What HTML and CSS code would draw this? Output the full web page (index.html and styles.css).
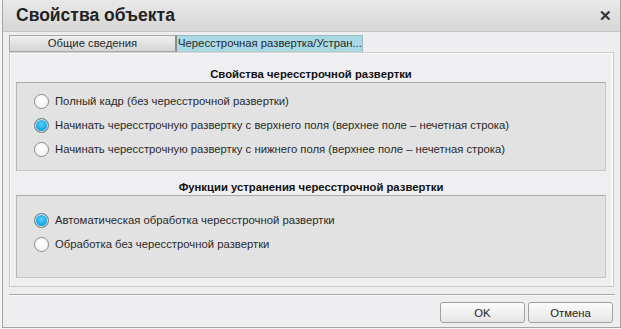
FILE: index.html
```html
<!DOCTYPE html>
<html lang="ru">

<head>
  <meta charset="UTF-8" />
  <title>Свойства объекта</title>
  <link rel="stylesheet" href="styles.css">
</head>

<body>
  <div class="dialog">
    <div class="title_bar">
      <span class="title">Свойства объекта</span>
      <span class="close_btn">&#x2715;</span>
    </div>

    <div class="content">
      <div class="tabs">
        <div class="tab">Общие сведения</div>
        <div class="tab tab_active">Чересстрочная развертка/Устран...</div>
      </div>

      <div class="panel">
        <div class="section_title">Свойства чересстрочной развертки</div>
        <div class="group group_first">
          <label class="radio_row"><span class="radio"></span>Полный кадр (без чересстрочной развертки)</label>
          <label class="radio_row"><span class="radio radio_on"></span>Начинать чересстрочную развертку с верхнего поля (верхнее поле – нечетная строка)</label>
          <label class="radio_row"><span class="radio"></span>Начинать чересстрочную развертку с нижнего поля (верхнее поле – нечетная строка)</label>
        </div>

        <div class="section_title">Функции устранения чересстрочной развертки</div>
        <div class="group group_second">
          <label class="radio_row"><span class="radio radio_on"></span>Автоматическая обработка чересстрочной развертки</label>
          <label class="radio_row"><span class="radio"></span>Обработка без чересстрочной развертки</label>
        </div>
      </div>

      <div class="footer">
        <button class="btn">OK</button>
        <button class="btn">Отмена</button>
      </div>
    </div>
  </div>
</body>

</html>
```

FILE: styles.css
```css
body {
  margin: 0;
  background: #f4f4f4;
  font-family: "Liberation Sans", Arial, sans-serif;
  font-size: 11.3px;
  color: #2a2a2a;
}

.dialog {
  box-sizing: border-box;
  width: 619px;
  height: 328px;
  margin-left: 2px;
  border: 1px solid #a4a4a4;
  border-top: 0;
  background: #eeeef0;
}

.title_bar {
  display: flex;
  align-items: center;
  justify-content: space-between;
  height: 32px;
  padding: 0 8px 0 13px;
  background: linear-gradient(#e9e9e9, #d6d6d6);
  border-bottom: 1px solid #c4c4c4;
  box-sizing: border-box;
}

.title {
  font-size: 17.5px;
  font-weight: bold;
  color: #222;
}

.close_btn {
  font-size: 15px;
  font-weight: bold;
  color: #333;
}

.content {
  padding: 3px 5px 0 6px;
}

.tabs {
  display: flex;
  height: 17px;
}

.tab {
  box-sizing: border-box;
  width: 168px;
  height: 17px;
  line-height: 15px;
  text-align: center;
  background: linear-gradient(#f0f0f0, #d4d4d4);
  border: 1px solid #a8a8a8;
  border-right: 2px solid #8e8e8e;
}

.tab_active {
  width: 186px;
  text-align: left;
  padding-left: 1px;
  white-space: nowrap;
  overflow: hidden;
  background: #a9d9e5;
  border: 1px solid #9cbcc4;
  border-left: 0;
  border-bottom-color: #b6cfd5;
}

.panel {
  box-sizing: border-box;
  width: 605px;
  height: 235px;
  padding: 13px 7px 0 6px;
  border: 1px solid #c8c8c8;
  border-top: 1px solid #d0d0d0;
  box-shadow: inset -2px 0 0 #fafafa, inset 1px 1px 0 #f8f8f8;
  background: #efeff1;
}

.section_title {
  height: 16px;
  line-height: 16px;
  text-align: center;
  font-weight: bold;
  color: #111;
}

.group {
  box-sizing: border-box;
  width: 590px;
  padding-left: 17px;
  background: #e2e2e2;
  border: 1px solid #c6c6c6;
  border-top-color: #a9a9a9;
  border-left-color: #b8b8b8;
}

.group_first {
  height: 89px;
  padding-top: 6px;
  margin-bottom: 8px;
}

.group_second {
  height: 83px;
  padding-top: 12px;
}

.radio_row {
  display: flex;
  align-items: center;
  gap: 6px;
  height: 24px;
  white-space: nowrap;
}

.radio {
  box-sizing: border-box;
  width: 15px;
  height: 15px;
  border-radius: 50%;
  border: 1px solid #8a8a8a;
  background: radial-gradient(circle at 50% 35%, #ffffff, #f0f0f0);
}

.radio_on {
  background: radial-gradient(circle at 50% 40%, #5fd0f8 0, #14a8e4 55%, #1290c8 100%);
  box-shadow: inset 0 0 0 1px #e8e8e8;
  border-color: #7c7c7c;
}

.footer {
  display: flex;
  justify-content: flex-end;
  gap: 3px;
  margin-top: 7px;
  padding: 7px 2px 0 0;
  border-top: 1px solid #a6a6a6;
  box-shadow: inset 0 1px 0 #fbfbfb;
}

.btn {
  width: 85px;
  height: 21px;
  font-family: "Liberation Sans", Arial, sans-serif;
  font-size: 11.3px;
  color: #1e1e1e;
  background: linear-gradient(#fbfbfb, #e6e6e6);
  border: 1px solid #a2a2a2;
  border-radius: 3px;
}
```
